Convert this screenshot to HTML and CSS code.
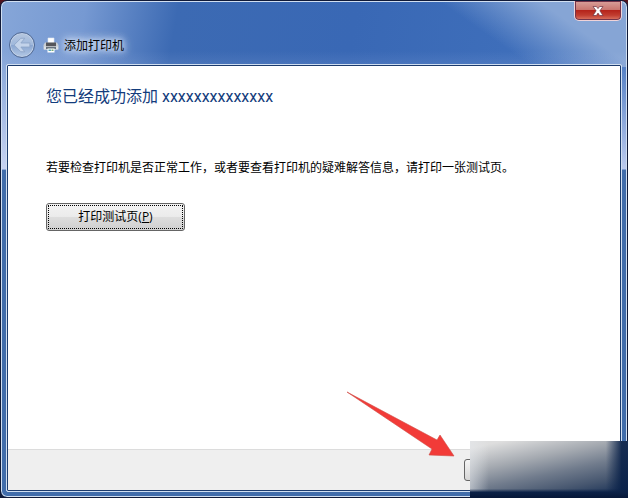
FILE: index.html
```html
<!DOCTYPE html>
<html lang="zh-CN">
<head>
    <meta charset="UTF-8">
    <meta name="viewport" content="width=device-width, initial-scale=1.0">
    <title>添加打印机</title>
    <link rel="stylesheet" href="styles.css">
</head>
<body>
    <div class="window">
        <header class="titlebar">
            <button class="close" type="button" aria-label="关闭">
                <svg width="14" height="12" viewBox="0 0 14 12">
                    <path d="M2 1.5H5.4L7 3.6L8.6 1.5H12L8.9 5.8L12 10.5H8.6L7 8.1L5.4 10.5H2L5.1 5.8Z" fill="#fff" stroke="#6b3040" stroke-width="0.7"/>
                </svg>
            </button>
            <div class="nav">
                <button class="back" type="button" aria-label="后退">
                    <svg width="18" height="18" viewBox="0 0 16 16">
                        <path d="M1 8L7 2H10.5L7 6.2H15V9.8H7L10.5 14H7Z" fill="#c3d3ea" stroke="#8fa6c8" stroke-width="0.8"/>
                    </svg>
                </button>
                <svg class="printer" width="16" height="16" viewBox="0 0 16 16">
                    <path d="M5 1H11V6H5Z" fill="#fff" stroke="#dfe6ee" stroke-width="0.6"/>
                    <path d="M2 5.5H4.5V6.5H11.5V5.5H14L15.5 8V12.5H.5V8Z" fill="#c9ced4"/>
                    <path d="M3 5.5H13V9.5H3Z" fill="#55565a"/>
                    <path d="M1 9.5H15V12.5H1Z" fill="#dde1e5"/>
                    <path d="M3 10H13V12H3Z" fill="#68747d"/>
                    <path d="M4.5 11.5H11.5V15.5H4.5Z" fill="#fff"/>
                    <path d="M5.5 12.5H8V14H5.5Z" fill="#55a7ba"/>
                    <path d="M8.5 12.5H10.5V14H8.5Z" fill="#79a974"/>
                </svg>
                <span class="title">添加打印机</span>
            </div>
        </header>

        <main class="content">
            <div class="page">
                <h1>您已经成功添加 xxxxxxxxxxxxxx</h1>
                <p>若要检查打印机是否正常工作，或者要查看打印机的疑难解答信息，请打印一张测试页。</p>
                <button class="test" type="button">打印测试页(<u>P</u>)</button>
            </div>
            <footer class="actions">
                <button class="finish" type="button" aria-label="完成"></button>
            </footer>
        </main>

        <!-- Arrow pointing at the finish button -->
        <svg class="arrow" width="110" height="68" viewBox="0 0 110 68">
            <path d="M1 1L91 49L94 44L108 65L83 64L86 58Z" fill="#f23b38" stroke="#cf4943" stroke-width="0.6"/>
        </svg>
    </div>
    <div class="mask"></div>
</body>
</html>
```

FILE: styles.css
```css
* {
    box-sizing: border-box;
}
body {
    margin: 0;
    background: linear-gradient(#57131c, #101a38 12px);
    font-family: "Open Sans", "Noto Sans CJK SC", sans-serif;
    font-size: 12px;
    line-height: 18px;
    color: #000;
}
button {
    padding: 0;
    font: inherit;
    color: inherit;
}
.window {
    position: relative;
    display: flex;
    flex-direction: column;
    min-height: 100vh;
    padding: 0 5px 5px;
    border: 1px solid #101a38;
    border-radius: 7px;
    background:
        linear-gradient(transparent 50px, rgba(216, 223, 249, 0.8) 168px, transparent 169px),
        linear-gradient(transparent 168px, #416dab 169px),
        linear-gradient(35deg, transparent 36%, #86a5d5 70%) right top / 200px 66px no-repeat,
        linear-gradient(100deg, #86a6d8, #7699d2 12%, #3c6ab3 25%, #3968b5 50%, #3e6eba 72%, #4a79c2);
    box-shadow: inset 0 0 0 1px #d1dff1;
}

/* Title bar */
.titlebar {
    display: flex;
    flex-direction: column;
    height: 64px;
    margin-bottom: -1px;
}
.close {
    display: flex;
    align-items: center;
    justify-content: center;
    align-self: flex-end;
    width: 48px;
    height: 20px;
    border: 1px solid #f0d3d8;
    border-top: 0;
    border-radius: 0 0 5px 5px;
    background: linear-gradient(#d9a19c, #ca7770 45%, #b5241b 50%, #c13d30 75%, #dc7865);
    box-shadow: inset 0 0 0 1px #743349;
}
.nav {
    display: flex;
    align-items: center;
    gap: 8px;
    margin-top: 11px;
    padding-left: 3px;
}
.back {
    display: flex;
    align-items: center;
    justify-content: center;
    width: 26px;
    height: 26px;
    border: 1px solid #4e6792;
    border-radius: 50%;
    background: linear-gradient(#b6c7df, #9fb8dc 50%, #8ba7d2 52%, #b3c8e4);
    box-shadow: inset 0 0 0 1px #c2d1e7;
}
.title {
    margin-left: -3px;
    padding-top: 2px;
    text-shadow: 0 0 4px #d6e2f5, 0 0 8px #d6e2f5, 0 0 8px #d6e2f5, 0 0 12px #d6e2f5;
}

/* Wizard page */
.content {
    display: flex;
    flex: 1;
    flex-direction: column;
    border: 1px solid #d1dff1;
    border-radius: 2px;
    background: #fff;
    box-shadow: inset 0 0 0 1px #1c3b6d;
}
.page {
    flex: 1;
    padding: 20px 39px;
}
h1 {
    margin: 0 0 50px;
    font-family: Roboto, "Noto Sans CJK SC", sans-serif;
    font-size: 16px;
    font-weight: 400;
    line-height: 24px;
    color: #133c7c;
}
p {
    margin: 0 0 26px;
}
.test {
    display: block;
    width: 139px;
    height: 28px;
    border: 1px solid #656565;
    border-radius: 3px;
    outline: 1px dotted #000;
    outline-offset: -3px;
    background: linear-gradient(#f3f3f3, #ebebeb 48%, #dddddd 52%, #cfcfcf);
}
.actions {
    display: flex;
    justify-content: flex-end;
    margin: 0 1px 1px;
    padding: 9px 61px 9px 0;
    border-top: 1px solid #dcdcdc;
    background: #efefef;
}
.finish {
    width: 95px;
    height: 22px;
    border: 1px solid #656565;
    border-radius: 3px;
    background: linear-gradient(#f5f5f5, #d5d5d5);
}

/* Overlays */
.arrow {
    position: absolute;
    right: 171px;
    bottom: 38px;
}
.mask {
    position: absolute;
    right: 0;
    bottom: 0;
    width: 158px;
    height: 57px;
    background:
        linear-gradient(transparent 84%, #0b2147 90%, #061737),
        linear-gradient(90deg, rgba(230, 233, 237, 0.55), transparent 12%),
        linear-gradient(90deg, transparent 86%, rgba(8, 32, 72, 0.9) 96%),
        linear-gradient(168deg, #dedede 8%, #a4a9b0 34%, #707b8c 55%, #46566f 75%, #1c3357 92%);
}
```
